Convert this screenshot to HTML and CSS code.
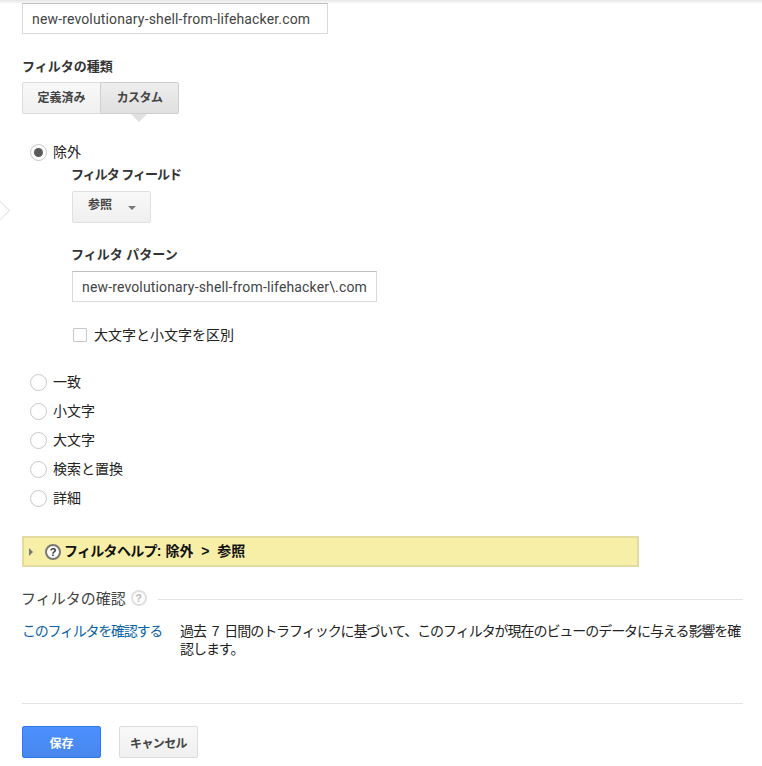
FILE: index.html
```html
<!DOCTYPE html>
<html>
<head>
	<title>フィルタ</title>
	<meta charset="utf-8"/>
	<link rel="stylesheet" href="styles.css">
</head>
<body>
	<div class="topshadow"></div>
	<span class="sidearrow"></span>
	<div class="page">
		<input class="field name" type="text" value="new-revolutionary-shell-from-lifehacker.com">
		<div class="label type-label">フィルタの種類</div>
		<div class="tabs">
			<div class="tab">定義済み</div>
			<div class="tab active">カスタム</div>
		</div>
		<div class="options">
			<div class="radio-row"><span class="radio checked"></span>除外</div>
			<div class="sub">
				<div class="label tight">フィルタ フィールド</div>
				<div class="select">参照<span class="caret"></span></div>
				<div class="label pattern-label">フィルタ パターン</div>
				<input class="field pattern" type="text" value="new-revolutionary-shell-from-lifehacker\.com">
				<div class="check-row"><span class="check"></span>大文字と小文字を区別</div>
			</div>
			<div class="radio-list">
				<div class="radio-row"><span class="radio"></span>一致</div>
				<div class="radio-row"><span class="radio"></span>小文字</div>
				<div class="radio-row"><span class="radio"></span>大文字</div>
				<div class="radio-row"><span class="radio"></span>検索と置換</div>
				<div class="radio-row"><span class="radio"></span>詳細</div>
			</div>
		</div>
		<div class="help">
			<span class="help-arrow"></span>
			<span class="qmark">?</span>
			<span class="help-text"><span class="help-kana">フィルタヘルプ</span>: <span class="help-path">除外 &gt; 参照</span></span>
		</div>
		<div class="section-head">
			<span class="section-title">フィルタの確認</span>
			<span class="qmark light">?</span>
			<span class="section-line"></span>
		</div>
		<div class="verify">
			<a class="link" href="#">このフィルタを確認する</a>
			<p class="verify-text">過去 7 日間のトラフィックに基づいて、このフィルタが現在のビューのデータに与える影響を確認します。</p>
		</div>
		<div class="actions">
			<button class="btn primary">保存</button>
			<button class="btn cancel">キャンセル</button>
		</div>
	</div>
</body>
</html>
```

FILE: styles.css
```css
html,body{
	margin: 0;
	padding: 0;
	background-color: #fff;
}
body{
	height: 766px;
	overflow: hidden;
	position: relative;
	font-family: "Liberation Sans", Arial, "Noto Sans CJK JP", sans-serif;
	font-size: 13px;
	color: #222;
}
.topshadow{
	position: absolute;
	left: 0;
	right: 0;
	top: 0;
	height: 4px;
	background: linear-gradient(#e6e6e6, #fff);
}
.sidearrow{
	position: absolute;
	left: -8px;
	top: 203px;
	width: 13px;
	height: 13px;
	background-color: #fff;
	border: 1px solid #e2e2e2;
	transform: rotate(45deg);
}
.page{
	position: relative;
	padding: 3px 19px 0 22px;
}
.field{
	display: block;
	box-sizing: border-box;
	height: 31px;
	padding: 0 9px;
	border: 1px solid #d9d9d9;
	border-top-color: #c0c0c0;
	font-family: Roboto, "Liberation Sans", sans-serif;
	font-size: 14px;
	letter-spacing: 0.15px;
	color: #444;
	background-color: #fff;
	outline: none;
}
.name{
	width: 306px;
}
.label{
	font-weight: bold;
	font-size: 13px;
	line-height: 18px;
	color: #333;
}
.label.tight{
	margin-left: -1px;
	letter-spacing: -1px;
}
.type-label{
	margin-top: 24px;
}
.tabs{
	display: flex;
	margin-top: 6px;
	position: relative;
	width: 157px;
}
.tab{
	box-sizing: border-box;
	width: 79px;
	height: 32px;
	line-height: 30px;
	text-align: center;
	font-size: 12px;
	font-weight: bold;
	color: #444;
	background: linear-gradient(#f8f8f8, #f0f0f0);
	border: 1px solid #dcdcdc;
	border-radius: 2px 0 0 2px;
}
.tab.active{
	margin-left: -1px;
	background: linear-gradient(#eeeeee, #e0e0e0);
	border-color: #cfcfcf;
	border-radius: 0 2px 2px 0;
	letter-spacing: -0.6px;
	position: relative;
}
.tab.active:after{
	content: "";
	position: absolute;
	left: 30px;
	top: 31px;
	border-left: 8px solid transparent;
	border-right: 8px solid transparent;
	border-top: 8px solid #e0e0e0;
}
.options{
	margin-top: 23px;
	padding-left: 8px;
}
.radio-row{
	box-sizing: border-box;
	display: flex;
	align-items: center;
	height: 29px;
	padding-bottom: 2px;
	font-size: 14px;
	color: #222;
}
.radio{
	box-sizing: border-box;
	width: 17px;
	height: 17px;
	margin: 4px 6px 0 0;
	border: 1px solid #c8c8c8;
	border-radius: 50%;
	background-color: #fff;
	position: relative;
}
.radio.checked:after{
	content: "";
	position: absolute;
	left: 3px;
	top: 3px;
	width: 9px;
	height: 9px;
	border-radius: 50%;
	background-color: #5a5a5a;
}
.sub{
	padding-left: 42px;
}
.select{
	box-sizing: border-box;
	width: 79px;
	height: 32px;
	margin-top: 7px;
	padding-left: 15px;
	line-height: 26px;
	font-size: 12px;
	font-weight: bold;
	color: #444;
	background: linear-gradient(#f8f8f8, #f0f0f0);
	border: 1px solid #e0e0e0;
	border-radius: 2px;
	position: relative;
}
.caret{
	position: absolute;
	left: 55px;
	top: 14px;
	border-left: 4px solid transparent;
	border-right: 4px solid transparent;
	border-top: 4px solid #777;
}
.pattern-label{
	margin: 23px 0 0 -1px;
}
.pattern{
	width: 305px;
	margin-top: 7px;
}
.check-row{
	box-sizing: border-box;
	display: flex;
	align-items: center;
	margin-top: 24px;
	height: 18px;
	padding-bottom: 2px;
	font-size: 14px;
}
.check{
	box-sizing: border-box;
	width: 14px;
	height: 14px;
	margin: 2px 7px 0 1px;
	border: 1px solid #c8c8c8;
	border-radius: 1px;
}
.radio-list{
	margin-top: 23px;
}
.help{
	box-sizing: border-box;
	display: flex;
	align-items: center;
	width: 617px;
	height: 31px;
	margin-top: 24px;
	padding-left: 5px;
	background-color: #f7efa8;
	border: 2px solid #e3dca0;
}
.help-arrow{
	border-top: 4px solid transparent;
	border-bottom: 4px solid transparent;
	border-left: 4px solid #777;
	margin-right: 12px;
}
.qmark{
	box-sizing: border-box;
	width: 16px;
	height: 16px;
	border: 2px solid #777;
	border-radius: 50%;
	background-color: #fff;
	text-align: center;
	font-size: 11px;
	line-height: 12px;
	font-weight: bold;
	color: #333;
}
.help-text{
	margin: -4px 0 0 3px;
	font-size: 14px;
	font-weight: bold;
	color: #111;
}
.help-kana{
	letter-spacing: -0.7px;
}
.help-path{
	word-spacing: 4px;
}
.section-head{
	display: flex;
	align-items: center;
	margin-top: 21px;
	height: 20px;
}
.section-title{
	margin: -2px 0 0 -1px;
	font-size: 15px;
	color: #444;
}
.qmark.light{
	margin-left: 5px;
	border-color: #e0e0e0;
	color: #bbb;
}
.section-line{
	flex: 1;
	height: 1px;
	margin: 2px 0 0 11px;
	background-color: #e3e3e3;
}
.verify{
	display: flex;
	margin-top: 14px;
	height: 81px;
	border-bottom: 1px solid #e3e3e3;
}
.link{
	flex: none;
	width: 158px;
	line-height: 18px;
	font-size: 14px;
	letter-spacing: -1.25px;
	color: #0b62a4;
	text-decoration: none;
}
.verify-text{
	margin: 0;
	line-height: 18px;
	font-size: 14px;
	letter-spacing: -1.05px;
	word-spacing: 3px;
	color: #222;
}
.actions{
	display: flex;
	gap: 18px;
	margin-top: 22px;
}
.btn{
	box-sizing: border-box;
	width: 79px;
	height: 32px;
	padding: 0;
	font-family: inherit;
	font-size: 12px;
	font-weight: bold;
	color: #444;
	background: linear-gradient(#f8f8f8, #f0f0f0);
	border: 1px solid #dcdcdc;
	border-radius: 2px;
}
.btn.cancel{
	letter-spacing: -0.6px;
}
.btn.primary{
	color: #fff;
	background: linear-gradient(#4d90fe, #4787ed);
	border-color: #3079ed;
}
```
